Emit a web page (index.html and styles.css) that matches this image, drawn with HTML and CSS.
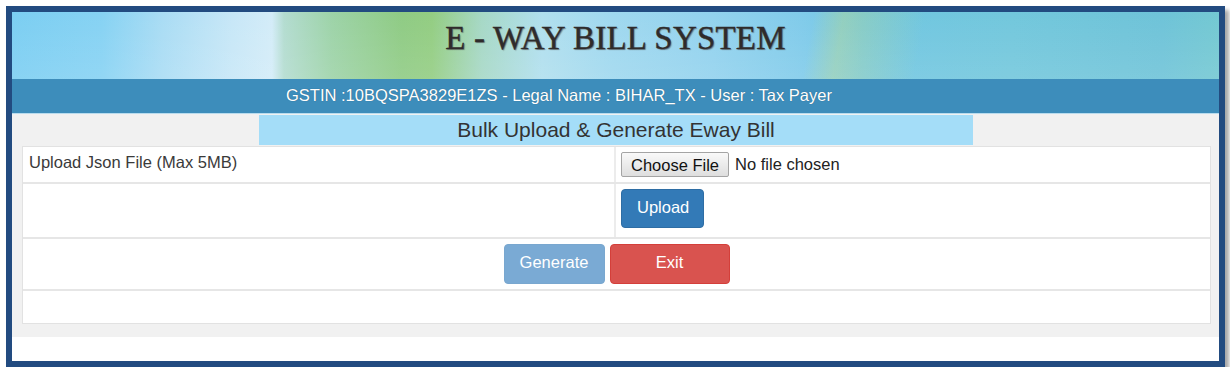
FILE: index.html
```html
<!DOCTYPE html>
<html>
<head>
<meta charset="utf-8">
<link rel="stylesheet" href="styles.css">
</head>
<body>
<div class="frame">
  <div class="banner">
    <div class="banner-glow"></div>
    <h1 class="title">E - WAY BILL SYSTEM</h1>
  </div>
  <div class="infobar">GSTIN :10BQSPA3829E1ZS - Legal Name : BIHAR_TX - User : Tax Payer</div>
  <div class="workarea">
    <div class="heading">Bulk Upload &amp; Generate Eway Bill</div>
    <div class="tbl">
      <div class="row row1">
        <div class="cell left">Upload Json File (Max 5MB)</div>
        <div class="cell right">
          <button class="choose">Choose File</button><span class="nofile">No file chosen</span>
        </div>
      </div>
      <div class="row row2">
        <div class="cell left"></div>
        <div class="cell right"><button class="btn btn-primary">Upload</button></div>
      </div>
      <div class="row row3">
        <div class="cell full">
          <button class="btn btn-disabled">Generate</button>
          <button class="btn btn-danger">Exit</button>
        </div>
      </div>
      <div class="row row4"><div class="cell full"></div></div>
    </div>
  </div>
  <div class="footer-space"></div>
</div>
</body>
</html>
```

FILE: styles.css
```css
* { box-sizing: border-box; }
html, body { margin: 0; padding: 0; background: #ffffff; }
body { font-family: "Liberation Sans", Arial, sans-serif; color: #333; }

.frame {
  margin: 6px 0 0 6px;
  width: 1219px;
  height: 361px;
  border: 6px solid #224b80;
  background: #ffffff;
  box-shadow: 4px 4px 4px rgba(0,0,0,0.35);
  display: flex;
  flex-direction: column;
}

.banner {
  position: relative;
  height: 67px;
  background:
    linear-gradient(90deg,
      #7bcef2 0px, #86d2f3 90px, #a9dcf4 150px, #c7e7f7 220px, #d3ecf8 260px,
      #b3dcd0 272px, #9dd3a8 320px, #8fcb84 390px, #93cd82 420px,
      #a6d8c6 470px, #b0dfee 530px, #9fd8ef 600px, #92d2ee 700px,
      #80cbea 790px, #70c6e2 850px, #72c7dc 1000px, #6ec3d8 1150px, #73c8d2 1207px);
  overflow: hidden;
}
.banner-glow {
  position: absolute;
  inset: 0;
  background:
    linear-gradient(180deg, rgba(255,255,255,0) 0%, rgba(255,255,255,0.10) 100%),
    linear-gradient(100deg, rgba(0,0,0,0) 790px, rgba(200,220,120,0.35) 820px, rgba(0,0,0,0) 900px);
}
.title {
  position: relative;
  margin: 0;
  padding-top: 9px;
  text-align: center;
  font-family: "Liberation Serif", "Times New Roman", serif;
  font-weight: normal;
  font-size: 33px;
  line-height: 34px;
  letter-spacing: 0.2px;
  color: #2f2b2b;
  -webkit-text-stroke: 0.4px #2f2b2b;
  text-shadow: 1px 1px 1px rgba(80,80,80,0.6);
}

.infobar {
  height: 35px;
  background: #3d8dbb;
  border-bottom: 1px solid #b9dcee;
  color: #ffffff;
  font-size: 16.5px;
  line-height: 33px;
  text-align: center;
  padding-right: 113px;
  text-shadow: 0 0 1px rgba(0,0,0,0.35);
}

.workarea {
  background: #f1f1f1;
  height: 223px;
  padding: 1px 8px 0 10px;
}
.heading {
  margin-left: 237px;
  width: 714px;
  height: 30px;
  background: #a4ddf8;
  text-align: center;
  font-size: 21px;
  line-height: 29px;
  color: #333;
}
.tbl {
  margin-top: 1px;
  background: #ffffff;
  border: 1px solid #e2e2e2;
}
.row { display: flex; border-top: 2px solid #e6e6e6; }
.row1 { border-top: none; height: 35px; }
.row2 { height: 55px; }
.row3 { height: 52px; }
.row4 { height: 34px; }

.cell { font-size: 16.5px; }
.left {
  width: 593px;
  border-right: 2px solid #ececec;
  padding: 6px 6px;
  color: #3a3a3a;
}
.right {
  flex: 1;
  padding: 5px 5px;
  display: flex;
  align-items: flex-start;
}
.full {
  flex: 1;
  padding-top: 5px;
  display: flex;
  justify-content: center;
  align-items: flex-start;
  gap: 5px;
}

.choose {
  font-family: "Liberation Sans", Arial, sans-serif;
  font-size: 16.5px;
  height: 25px;
  padding: 0 9px;
  color: #111;
  background: linear-gradient(#f9f9f9, #dedede);
  border: 1px solid #a4a4a4;
  border-radius: 2px;
  line-height: 22px;
}
.nofile {
  margin-left: 6px;
  line-height: 25px;
  color: #222;
}

.btn {
  font-family: "Liberation Sans", Arial, sans-serif;
  font-size: 16.5px;
  color: #ffffff;
  border-radius: 4px;
  border: 1px solid transparent;
  line-height: 22px;
  padding: 0 15px 4px;
}
.btn-primary {
  height: 39px;
  width: 83px;
  background: #337ab7;
  border-color: #2e6da4;
}
.btn-disabled {
  height: 40px;
  width: 101px;
  background: #7aaad4;
  border-color: #79a7cf;
}
.btn-danger {
  height: 40px;
  width: 120px;
  background: #d9534f;
  border-color: #d43f3a;
}

.footer-space { flex: 1; background: #ffffff; }
```
